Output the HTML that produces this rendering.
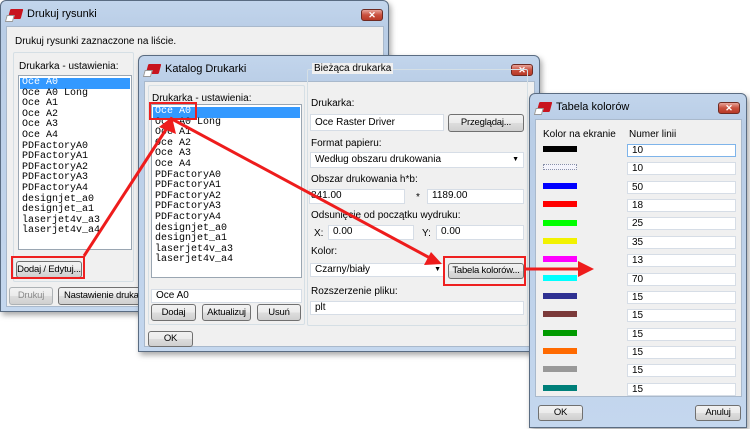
<!DOCTYPE html>
<html><head><meta charset="utf-8"><style>
*{box-sizing:border-box;margin:0;padding:0}
body{width:750px;height:429px;background:#fff;position:relative;overflow:hidden;font-family:"Liberation Sans",sans-serif;font-size:10px;color:#000}
.a{position:absolute}
.win{position:absolute;background:linear-gradient(#c2d5ec,#b9cde6 30px,#c4d7ee);border:1px solid #5a6c82;border-radius:6px 6px 0 0;box-shadow:2px 3px 6px rgba(0,0,0,.35);overflow:hidden}
.ttl{position:absolute;left:26px;top:7px;font-size:11px}
.ico{position:absolute;left:8px;top:8px;width:13px;height:10px;background:#c8141e;transform:skewX(-15deg);border-radius:1px}
.ico:after{content:"";position:absolute;left:-2px;top:6px;width:6px;height:5px;background:#fff;border:1px solid #999}
.cls{position:absolute;width:22px;height:12px;border:1px solid #6e2a22;border-radius:3px;background:linear-gradient(#e8a49a,#c9503e 50%,#b83a28);color:#fff;font-size:9px;font-weight:bold;text-align:center;line-height:10px}
.pan{position:absolute;background:#f0f0f0;border:1px solid #a9b9cc}
.box{position:absolute;border:1px solid #d5dfe5;border-radius:2px}
.lst{position:absolute;background:#fff;border:1px solid #9aa6b2;font-family:"Liberation Mono",monospace;font-size:10px;padding:2px 1px;overflow:hidden}
.lst div{height:10.6px;line-height:10.6px;padding-left:2px;white-space:pre}
.sel{background:#3399ff;color:#fff}
.fld{position:absolute;background:#fff;border:1px solid #d6dde6;padding-left:4px;line-height:12px;font-size:10px;white-space:nowrap;overflow:hidden}
.btn{position:absolute;border:1px solid #707070;border-radius:3px;background:linear-gradient(#f2f2f2,#ebebeb 50%,#dddddd 51%,#cfcfcf);text-align:center;font-size:9.5px;white-space:nowrap;overflow:hidden;letter-spacing:-0.2px}
.lbl{position:absolute;font-size:10px;white-space:nowrap}
.sw{position:absolute;left:13px;width:34px;height:6px}
.rb{position:absolute;border:2px solid #ee2020}
</style></head><body>

<div class="win" style="left:0;top:0;width:389px;height:312px">
<div class="ico"></div><div class="ttl">Drukuj rysunki</div>
<div class="cls" style="left:360px;top:8px">✕</div>
<div class="pan" style="left:5px;top:25px;width:378px;height:281px"></div>
<div class="lbl" style="left:14px;top:35px">Drukuj rysunki zaznaczone na liście.</div>
<div class="box" style="left:12px;top:51px;width:121px;height:230px"></div>
<div class="lbl" style="left:18px;top:60px">Drukarka - ustawienia:</div>
<div class="lst" style="left:17px;top:74px;width:114px;height:175px">
<div class="sel">Oce A0</div><div>Oce A0 Long</div><div>Oce A1</div><div>Oce A2</div><div>Oce A3</div><div>Oce A4</div><div>PDFactoryA0</div><div>PDFactoryA1</div><div>PDFactoryA2</div><div>PDFactoryA3</div><div>PDFactoryA4</div><div>designjet_a0</div><div>designjet_a1</div><div>laserjet4v_a3</div><div>laserjet4v_a4</div></div>
<div class="btn" style="left:15px;top:260px;width:66px;height:17px;line-height:15px">Dodaj / Edytuj...</div>
<div class="btn" style="left:8px;top:286px;width:44px;height:18px;line-height:16px;color:#8a8a8a;border-color:#adb2b5">Drukuj</div>
<div class="btn" style="left:57px;top:286px;width:100px;height:18px;line-height:16px;text-align:left;padding-left:5px">Nastawienie drukarki</div>
</div>
<div class="rb" style="left:11px;top:256px;width:74px;height:23px"></div>

<div class="win" style="left:138px;top:55px;width:402px;height:297px">
<div class="ico"></div><div class="ttl">Katalog Drukarki</div>
<div class="cls" style="left:372px;top:8px">✕</div>
<div class="pan" style="left:5px;top:25px;width:391px;height:266px"></div>
<div class="box" style="left:9px;top:29px;width:157px;height:240px"></div>
<div class="lbl" style="left:13px;top:37px">Drukarka - ustawienia:</div>
<div class="lst" style="left:12px;top:48px;width:151px;height:174px">
<div class="sel">Oce A0</div><div>Oce A0 Long</div><div>Oce A1</div><div>Oce A2</div><div>Oce A3</div><div>Oce A4</div><div>PDFactoryA0</div><div>PDFactoryA1</div><div>PDFactoryA2</div><div>PDFactoryA3</div><div>PDFactoryA4</div><div>designjet_a0</div><div>designjet_a1</div><div>laserjet4v_a3</div><div>laserjet4v_a4</div></div>
<div class="fld" style="left:12px;top:233px;width:151px;height:14px">Oce A0</div>
<div class="btn" style="left:12px;top:248px;width:45px;height:17px;line-height:15px">Dodaj</div>
<div class="btn" style="left:63px;top:248px;width:49px;height:17px;line-height:15px">Aktualizuj</div>
<div class="btn" style="left:118px;top:248px;width:44px;height:17px;line-height:15px">Usuń</div>
<div class="btn" style="left:9px;top:275px;width:45px;height:16px;line-height:14px">OK</div>
<div class="box" style="left:168px;top:13px;width:221px;height:257px"></div>
<div class="lbl" style="left:173px;top:7px;background:#f0f0f0;padding:0 2px">Bieżąca drukarka</div>
<div class="lbl" style="left:172px;top:42px">Drukarka:</div>
<div class="fld" style="left:171px;top:58px;width:134px;height:17px;line-height:15px">Oce Raster Driver</div>
<div class="btn" style="left:309px;top:58px;width:76px;height:18px;line-height:16px">Przeglądaj...</div>
<div class="lbl" style="left:172px;top:82px">Format papieru:</div>
<div class="fld" style="left:171px;top:96px;width:214px;height:16px;line-height:14px">Według obszaru drukowania<span style="position:absolute;right:4px;top:0;font-size:7px">▼</span></div>
<div class="lbl" style="left:172px;top:118px">Obszar drukowania h*b:</div>
<div class="fld" style="left:170px;top:133px;width:96px;height:15px;padding-left:1px">841.00</div>
<div class="lbl" style="left:277px;top:136px">*</div>
<div class="fld" style="left:288px;top:133px;width:97px;height:15px">1189.00</div>
<div class="lbl" style="left:172px;top:154px">Odsunięcie od początku wydruku:</div>
<div class="lbl" style="left:175px;top:172px">X:</div>
<div class="fld" style="left:189px;top:169px;width:86px;height:15px">0.00</div>
<div class="lbl" style="left:283px;top:172px">Y:</div>
<div class="fld" style="left:297px;top:169px;width:88px;height:15px">0.00</div>
<div class="lbl" style="left:172px;top:190px">Kolor:</div>
<div class="fld" style="left:171px;top:207px;width:134px;height:14px">Czarny/biały<span style="position:absolute;right:2px;top:0;font-size:7px">▼</span></div>
<div class="btn" style="left:309px;top:207px;width:76px;height:16px;line-height:14px">Tabela kolorów...</div>
<div class="lbl" style="left:172px;top:230px">Rozszerzenie pliku:</div>
<div class="fld" style="left:171px;top:245px;width:214px;height:14px">plt</div>
</div>
<div class="rb" style="left:149px;top:102px;width:48px;height:18px"></div>
<div class="rb" style="left:443px;top:256px;width:83px;height:30px"></div>

<div class="win" style="left:529px;top:93px;width:218px;height:335px">
<div class="ico"></div><div class="ttl">Tabela kolorów</div>
<div class="cls" style="left:188px;top:8px">✕</div>
<div class="pan" style="left:5px;top:25px;width:207px;height:278px"></div>
<div class="lbl" style="left:13px;top:35px">Kolor na ekranie</div>
<div class="lbl" style="left:99px;top:35px">Numer linii</div>
<div class="sw" style="top:52px;background:#000"></div>
<div class="sw" style="top:70px;border:1px dotted #8890a8;background:#f4f4fb"></div>
<div class="sw" style="top:89px;background:#0000ff"></div>
<div class="sw" style="top:107px;background:#ff0000"></div>
<div class="sw" style="top:126px;background:#00ff00"></div>
<div class="sw" style="top:144px;background:#f2f200"></div>
<div class="sw" style="top:162px;background:#ff00ff"></div>
<div class="sw" style="top:181px;background:#00ffff"></div>
<div class="sw" style="top:199px;background:#2e3192"></div>
<div class="sw" style="top:217px;background:#7b3a3a"></div>
<div class="sw" style="top:236px;background:#009a00"></div>
<div class="sw" style="top:254px;background:#ff6a00"></div>
<div class="sw" style="top:272px;background:#999999"></div>
<div class="sw" style="top:291px;background:#00807a"></div>
<div class="fld" style="left:97px;top:50px;width:109px;height:13px;border-color:#7eb4ea">10</div>
<div class="fld" style="left:97px;top:68px;width:109px;height:13px">10</div>
<div class="fld" style="left:97px;top:87px;width:109px;height:13px">50</div>
<div class="fld" style="left:97px;top:105px;width:109px;height:13px">18</div>
<div class="fld" style="left:97px;top:123px;width:109px;height:13px">25</div>
<div class="fld" style="left:97px;top:142px;width:109px;height:13px">35</div>
<div class="fld" style="left:97px;top:160px;width:109px;height:13px">13</div>
<div class="fld" style="left:97px;top:179px;width:109px;height:13px">70</div>
<div class="fld" style="left:97px;top:197px;width:109px;height:13px">15</div>
<div class="fld" style="left:97px;top:215px;width:109px;height:13px">15</div>
<div class="fld" style="left:97px;top:234px;width:109px;height:13px">15</div>
<div class="fld" style="left:97px;top:252px;width:109px;height:13px">15</div>
<div class="fld" style="left:97px;top:270px;width:109px;height:13px">15</div>
<div class="fld" style="left:97px;top:289px;width:109px;height:13px">15</div>
<div class="btn" style="left:8px;top:311px;width:45px;height:16px;line-height:14px">OK</div>
<div class="btn" style="left:165px;top:311px;width:46px;height:16px;line-height:14px">Anuluj</div>
</div>

<svg class="a" style="left:0;top:0" width="750" height="429">
<g stroke="#ee1c1c" stroke-width="3" fill="#ee1c1c">
<line x1="84" y1="256" x2="167" y2="128"/>
<polygon points="172,117 176,134 159,127" stroke="none"/>
<line x1="170" y1="118" x2="430" y2="258"/>
<polygon points="442,264 424,265 431,252" stroke="none"/>
<line x1="526" y1="269" x2="580" y2="269"/>
<polygon points="594,269 578,261 578,277" stroke="none"/>
</g>
</svg>
</body></html>
